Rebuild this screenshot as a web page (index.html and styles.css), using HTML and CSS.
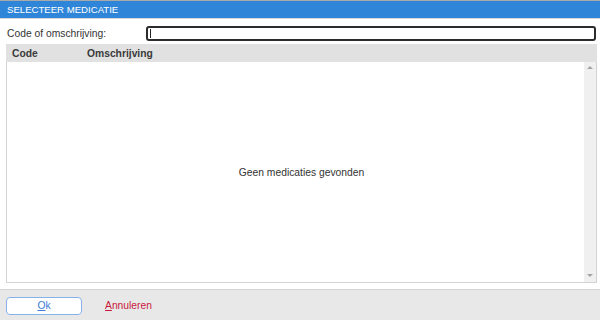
FILE: index.html
```html
<!DOCTYPE html>
<html lang="nl">
<head>
<meta charset="utf-8">
<title>Selecteer medicatie</title>
<link rel="stylesheet" href="styles.css">
</head>
<body>
<div class="window">
  <div class="titlebar">SELECTEER MEDICATIE</div>
  <div class="content">
    <div class="search-row">
      <label class="search-label">Code of omschrijving:</label>
      <div class="search-field"><span class="caret"></span></div>
    </div>
    <div class="grid">
      <div class="grid-head">
        <div class="col-code">Code</div>
        <div class="col-desc">Omschrijving</div>
      </div>
      <div class="grid-body">
        <div class="empty">Geen medicaties gevonden</div>
        <div class="scrollbar">
          <span class="arrow up"></span>
          <span class="arrow down"></span>
        </div>
      </div>
    </div>
  </div>
  <div class="footer">
    <button class="btn-ok"><u>O</u>k</button>
    <a class="btn-cancel"><u>A</u>nnuleren</a>
  </div>
</div>
</body>
</html>
```
FILE: styles.css
```css
html, body {
  margin: 0;
  padding: 0;
  background: #ffffff;
}
body {
  font-family: "Liberation Sans", Arial, sans-serif;
  font-size: 10.3px;
  color: #333333;
}
.window {
  width: 600px;
  height: 320px;
  display: flex;
  flex-direction: column;
  border-top: 1px solid #a9a9a9;
  box-sizing: border-box;
}
.titlebar {
  height: 17px;
  background: #2f86d9;
  color: #ffffff;
  font-size: 9.6px;
  line-height: 17px;
  padding-left: 7px;
  border-bottom: 1px solid #d6d6d6;
  flex: none;
}
.content {
  flex: 1;
  display: flex;
  flex-direction: column;
  padding: 7px 3px 6px 6px;
  min-height: 0;
}
.search-row {
  display: flex;
  align-items: center;
  height: 15px;
  margin-right: 1px;
}
.search-label {
  width: 139px;
  flex: none;
  padding-left: 1px;
}
.search-field {
  flex: 1;
  height: 15px;
  box-sizing: border-box;
  border: 2px solid #2b2b2b;
  border-radius: 3px;
  display: flex;
  align-items: center;
  padding-left: 2px;
}
.caret {
  width: 1px;
  height: 9px;
  background: #222222;
}
.grid {
  margin-top: 3px;
  flex: 1;
  display: flex;
  flex-direction: column;
  border: 1px solid #d3d3d3;
  border-top: none;
}
.grid-head {
  height: 18px;
  background: #e1e1e1;
  display: flex;
  align-items: center;
  font-weight: bold;
  color: #3a3a3a;
  margin: 0 -1px;
}
.col-code {
  width: 75px;
  padding-left: 6px;
}
.col-desc {
  flex: 1;
}
.grid-body {
  flex: 1;
  position: relative;
  display: flex;
  align-items: center;
  justify-content: center;
}
.empty {
  color: #333333;
}
.scrollbar {
  position: absolute;
  top: 0;
  right: 0;
  bottom: 0;
  width: 12px;
  background: #f0f0f0;
}
.arrow {
  position: absolute;
  left: 3px;
  width: 0;
  height: 0;
  border-left: 3px solid transparent;
  border-right: 3px solid transparent;
}
.arrow.up {
  top: 4px;
  border-bottom: 3px solid #a3a3a3;
}
.arrow.down {
  bottom: 5px;
  border-top: 3px solid #a3a3a3;
}
.footer {
  flex: none;
  height: 31px;
  background: #e8e8e8;
  border-top: 1px solid #d4d4d4;
  display: flex;
  align-items: flex-start;
  padding: 7px 0 0 6px;
  box-sizing: border-box;
}
.btn-ok {
  width: 76px;
  height: 18px;
  background: #ffffff;
  border: 1px solid #86b2ea;
  border-radius: 4px;
  color: #3d7bd6;
  font-family: "Liberation Sans", Arial, sans-serif;
  font-size: 10.3px;
  padding: 0;
  line-height: 16px;
}
.btn-cancel {
  margin-left: 23px;
  color: #c8193c;
  line-height: 18px;
}
```
